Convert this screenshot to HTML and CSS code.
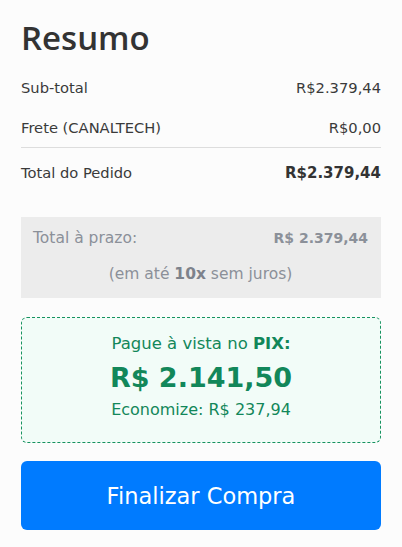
FILE: index.html
```html
<!DOCTYPE html>
<html lang="pt-BR">
<head>
<meta charset="utf-8">
<link rel="stylesheet" href="styles.css">
</head>
<body>
<div class="resumo">
  <h1 class="title">Resumo</h1>
  <div class="row row-first"><span>Sub-total</span><span>R$2.379,44</span></div>
  <div class="row row-frete"><span>Frete (CANALTECH)</span><span>R$0,00</span></div>
  <div class="row row-total"><span>Total do Pedido</span><span class="total-value">R$2.379,44</span></div>
  <div class="prazo">
    <div class="prazo-line"><span>Total à prazo:</span><strong>R$ 2.379,44</strong></div>
    <div class="prazo-sub">(em até <strong>10x</strong> sem juros)</div>
  </div>
  <div class="pix">
    <div class="pix-label">Pague à vista no <strong>PIX:</strong></div>
    <div class="pix-value">R$ 2.141,50</div>
    <div class="pix-save">Economize: R$ 237,94</div>
  </div>
  <button class="btn">Finalizar Compra</button>
</div>
</body>
</html>
```
FILE: styles.css
```css
html, body { margin: 0; padding: 0; background: #fcfcfc; }
body { font-family: "DejaVu Sans", "Noto Sans", sans-serif; color: #333; }
.resumo { padding: 16px 21px 0 21px; display: flex; flex-direction: column; }
.title { margin: 0; font-family: "Open Sans", sans-serif; font-size: 33px; font-weight: 600; color: #333; line-height: 44px; }
.row { display: flex; justify-content: space-between; align-items: center; font-size: 14.7px; height: 39px; color: #3a3a3a; }
.row-first { margin-top: 8px; }
.row-frete { border-bottom: 1px solid #ddd; height: 40px; }
.row-total { height: 49px; }
.total-value { font-weight: 700; font-size: 15px; color: #333; }
.prazo { margin-top: 20px; background: #ececec; height: 81px; box-sizing: border-box; padding: 0 13px 0 12px; color: #8b9099; display: flex; flex-direction: column; }
.prazo-line { display: flex; justify-content: space-between; align-items: center; height: 42px; font-size: 15.5px; }
.prazo-line strong { font-weight: 700; font-size: 14px; }
.prazo-sub { text-align: center; font-size: 15.5px; line-height: 30px; }
.prazo-sub strong { font-weight: 700; color: #7d828b; }
.pix { margin-top: 19px; height: 126px; box-sizing: border-box; border: 1px dashed #16925f; border-radius: 6px; background: #f2fcf8; color: #12875a; text-align: center; display: flex; flex-direction: column; padding-top: 15px; }
.pix-label { font-size: 16.5px; line-height: 22px; }
.pix-label strong { font-weight: 700; }
.pix-value { font-size: 27px; font-weight: 700; line-height: 40px; margin-top: 3px; }
.pix-save { font-size: 16px; line-height: 24px; }
.btn { margin-top: 18px; height: 69px; border: none; border-radius: 6px; background: #007bff; color: #fff; font-family: inherit; font-size: 22.5px; cursor: pointer; }
```
